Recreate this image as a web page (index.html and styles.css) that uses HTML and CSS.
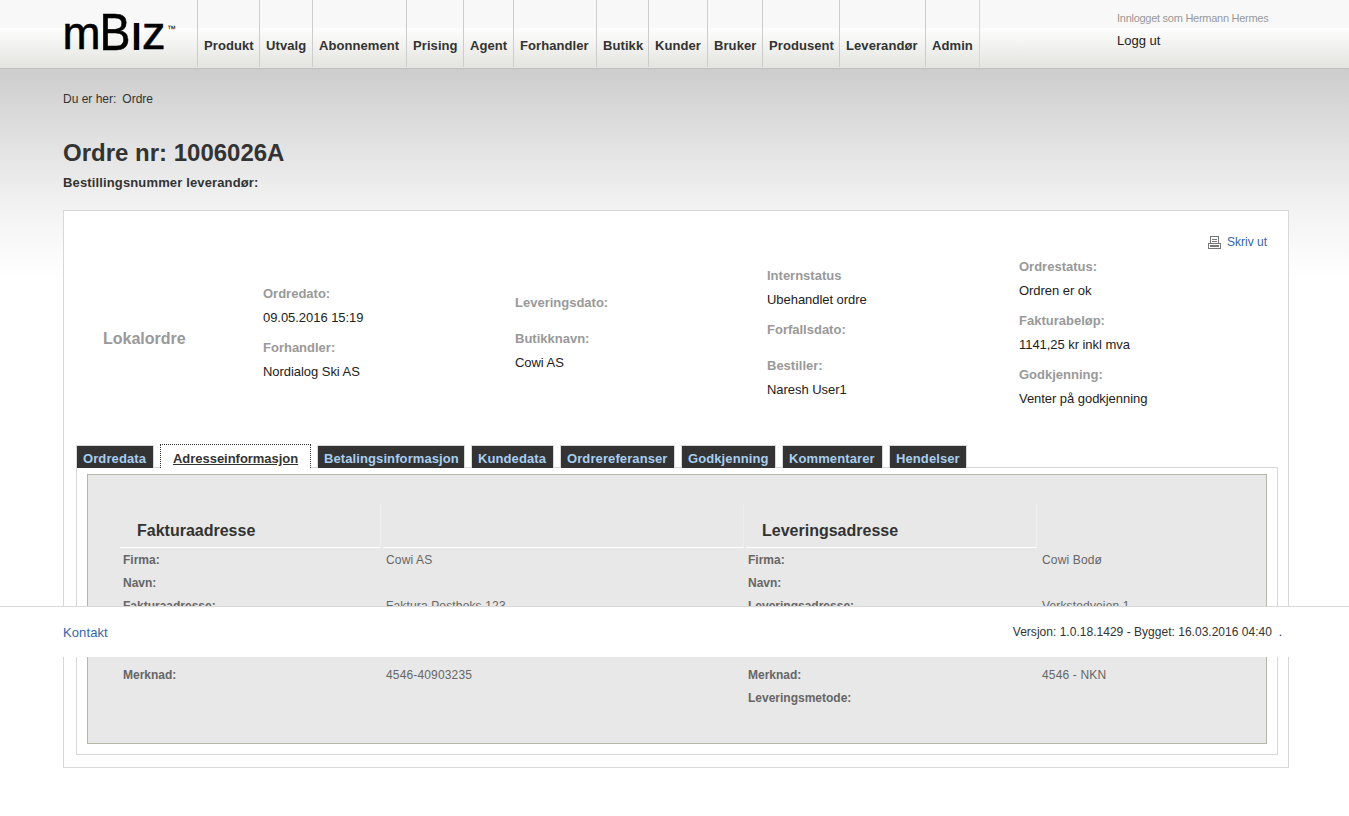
FILE: index.html
```html
<!DOCTYPE html>
<html lang="no">
<head>
<meta charset="utf-8">
<title>mBiz - Ordre</title>
<link rel="stylesheet" href="styles.css">
</head>
<body>
<header class="top">
  <svg class="logo" width="120" height="60" viewBox="60 0 120 60" role="img" aria-label="mBiz">
    <text x="62.6" y="49" font-size="47" textLength="38" lengthAdjust="spacingAndGlyphs">m</text>
    <text x="99.5" y="50" font-size="52" textLength="31" lengthAdjust="spacingAndGlyphs">B</text>
    <text x="131.5" y="49.5" font-size="38" font-weight="bold" textLength="10" lengthAdjust="spacingAndGlyphs" stroke="none">I</text>
    <text x="142" y="49" font-size="47">z</text>
    <text x="167" y="32" font-size="9" stroke="none">™</text>
  </svg>
  <nav class="nav">
    <a>Produkt</a><a>Utvalg</a><a>Abonnement</a><a>Prising</a><a>Agent</a><a>Forhandler</a><a>Butikk</a><a>Kunder</a><a>Bruker</a><a>Produsent</a><a>Leverandør</a><a>Admin</a>
  </nav>
  <div class="user"><span class="who">Innlogget som Hermann Hermes</span><a class="logout">Logg ut</a></div>
</header>
<main class="page">
  <div class="crumb"><span>Du er her:</span><span>Ordre</span></div>
  <h1>Ordre nr: 1006026A</h1>
  <h2>Bestillingsnummer leverandør:</h2>
  <section class="card">
    <a class="print">
      <svg width="13" height="13" viewBox="0 0 13 13" shape-rendering="crispEdges" fill="none" stroke="#777">
        <path d="M2.5 8V.5H10.5V8M4 3.5H9M4 5.5H9M.5 7.5H12.5V12.5H.5Z"/><path d="M2 10H11" stroke-width="2"/>
      </svg><span>Skriv ut</span></a>
    <div class="info">
      <div class="kind">Lokalordre</div>
      <dl><dt>Ordredato:</dt><dd>09.05.2016 15:19</dd><dt>Forhandler:</dt><dd>Nordialog Ski AS</dd></dl>
      <dl><dt>Leveringsdato:</dt><dd class="none"></dd><dt>Butikknavn:</dt><dd>Cowi AS</dd></dl>
      <dl><dt>Internstatus</dt><dd>Ubehandlet ordre</dd><dt>Forfallsdato:</dt><dd class="none"></dd><dt>Bestiller:</dt><dd>Naresh User1</dd></dl>
      <dl><dt>Ordrestatus:</dt><dd>Ordren er ok</dd><dt>Fakturabeløp:</dt><dd>1141,25 kr inkl mva</dd><dt>Godkjenning:</dt><dd>Venter på godkjenning</dd></dl>
    </div>
    <div class="tabs">
      <a>Ordredata</a><a class="active">Adresseinformasjon</a><a>Betalingsinformasjon</a><a>Kundedata</a><a>Ordrereferanser</a><a>Godkjenning</a><a>Kommentarer</a><a>Hendelser</a>
    </div>
    <div class="pane">
      <div class="box">
        <div class="grid heads"><h3>Fakturaadresse</h3><h3></h3><h3>Leveringsadresse</h3></div>
        <div class="grid row"><b>Firma:</b><span>Cowi AS</span><b>Firma:</b><span>Cowi Bodø</span></div>
        <div class="grid row"><b>Navn:</b><span></span><b>Navn:</b><span></span></div>
        <div class="grid row"><b>Fakturaadresse:</b><span>Faktura Postboks 123</span><b>Leveringsadresse:</b><span>Verkstedveien 1</span></div>
        <div class="grid row"></div>
        <div class="grid row"></div>
        <div class="grid row"><b>Merknad:</b><span>4546-40903235</span><b>Merknad:</b><span>4546 - NKN</span></div>
        <div class="grid row"><b></b><span></span><b>Leveringsmetode:</b><span></span></div>
      </div>
    </div>
  </section>
</main>
<footer class="foot"><a>Kontakt</a><span>Versjon: 1.0.18.1429 - Bygget: 16.03.2016 04:40&nbsp; .</span></footer>
</body>
</html>
```
FILE: styles.css
```css
* { box-sizing: border-box; }
body {
  margin: 0; height: 816px; overflow: hidden; position: relative;
  background: linear-gradient(#cdcdcd 69px, #dedede 130px, #f3f3f3 210px, #fff 280px);
  font: 13px/18px "Liberation Sans", Arial, sans-serif; color: #333;
}
h1, h2, h3, dl, dd { margin: 0; }
.top {
  height: 69px; display: flex; padding-left: 60px; border-bottom: 1px solid #c0c0c0;
  background: linear-gradient(#f8f8f8 28px, #fdfdfd 28px, #e4e4e0 67px);
}
.logo { width: 120px; margin-right: 17px; font-family: "Liberation Sans", Arial, sans-serif; fill: #000; stroke: #000; stroke-width: .6px; }
.nav {
  display: grid; height: 67px; width: 783px;
  grid-template-columns: 62px 53px 94px 57px 50px 83px 52px 59px 55px 77px 86px 55px;
}
.nav a { border-left: 1px solid #ccc; padding: 37px 0 0 6px; font-weight: bold; letter-spacing: .08px; white-space: nowrap; }
.nav a:last-child { border-right: 1px solid #d8d8d8; }
.user { margin-left: 137px; padding-top: 10px; display: flex; flex-direction: column; }
.who { font-size: 11px; line-height: 16px; color: #999; letter-spacing: -.27px; }
.logout { margin-top: 6px; color: #222; }
.page { padding: 21px 60px 0 63px; }
.crumb { display: flex; gap: 6px; font-size: 12px; }
h1 { margin-top: 29px; font-size: 24px; line-height: 32px; }
h2 { margin-top: 5px; font-size: 13px; line-height: 18px; letter-spacing: .14px; }
.card { margin-top: 18px; width: 1226px; height: 558px; padding: 22px 10px 12px 12px; background: #fff; border: 1px solid #d8d8d8; }
.print { display: flex; justify-content: flex-end; gap: 6px; padding-right: 11px; font-size: 12px; line-height: 18px; color: #36a; }
.print svg { margin-top: 3px; }
.info { display: grid; grid-template-columns: 187px 252px 252px 252px 1fr; align-items: center; height: 162px; margin-top: 1px; }
.kind { padding: 12px 0 0 27px; font-size: 16px; font-weight: bold; color: #999; }
dt { font-weight: bold; color: #999; margin-top: 12px; line-height: 18px; }
dt:first-child { margin-top: 0; }
dd { line-height: 18px; margin-top: 6px; color: #222; letter-spacing: -.05px; }
dd.none { height: 6px; margin: 0; }
.tabs {
  display: grid; grid-template-columns: 78px 151px 148px 83px 115px 95px 101px 78px; gap: 6px;
  align-items: end; height: 24px; margin-top: 30px; margin-bottom: -1px; position: relative;
}
.tabs a {
  height: 23px; padding: 4px 0 0 6px; border: 1px solid #d8d8d8; border-bottom: 0;
  background: #333; color: #a8cef0; font-weight: bold; letter-spacing: .1px; white-space: nowrap;
}
.tabs .active { height: 24px; padding: 5px 0 0 12px; background: #fff; color: #333; border: 1px dotted #333; border-bottom: 0; letter-spacing: -.03px; text-decoration: underline; }
.pane { width: 1202px; height: 288px; padding: 6px 10px 10px; border: 1px solid #d8d8d8; }
.box { height: 270px; padding: 28px 32px; background: #e8e8e8; border: 1px solid #b5b5aa; }
.grid { display: grid; grid-template-columns: 261px 361px 291px 1fr; column-gap: 2px; }
.heads { height: 45px; }
.heads h3 { border-right: 1px solid #eee; border-bottom: 1px solid #fff; padding: 18px 0 0 17px; font-size: 16px; line-height: 20px; }
.heads h3:last-child { padding-left: 16px; }
.row { grid-template-columns: 261px 360px 292px 1fr; height: 23px; padding: 3px 0 0 3px; font-size: 12px; color: #666; }
.row span { letter-spacing: .15px; }
.foot {
  position: absolute; top: 606px; left: 0; right: 0; height: 51px;
  display: flex; justify-content: space-between; padding: 16px 67px 0 63px;
  background: #fff; border-top: 1px solid #d8d8d8;
}
.foot a { color: #36a; padding-top: 1px; letter-spacing: .1px; }
.foot span { font-size: 12px; letter-spacing: .02px; }
```
